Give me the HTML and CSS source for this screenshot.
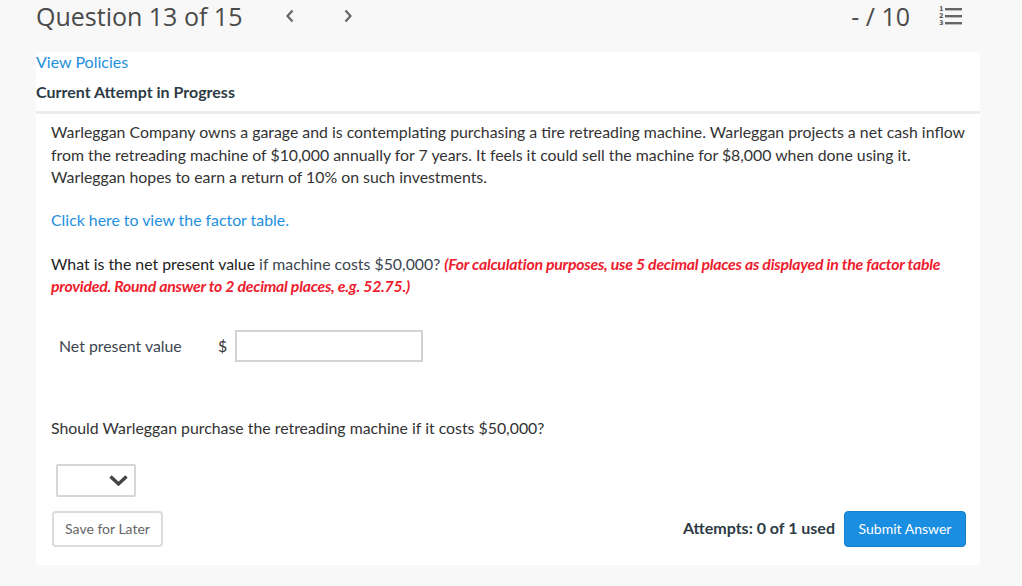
FILE: index.html
```html
<!DOCTYPE html>
<html lang="en">
<head>
<meta charset="utf-8">
<title>Question 13 of 15</title>
<link rel="stylesheet" href="styles.css">
</head>
<body>
<header class="topbar">
  <h1 class="q-title">Question 13 of 15</h1>
  <nav class="q-nav">
    <button class="nav-btn" aria-label="Previous"><svg width="10" height="14" viewBox="0 0 10 14"><path d="M7.5 1.5 L2.5 7 L7.5 12.5" fill="none" stroke="#666" stroke-width="2.2"/></svg></button>
    <button class="nav-btn" aria-label="Next"><svg width="10" height="14" viewBox="0 0 10 14"><path d="M2.5 1.5 L7.5 7 L2.5 12.5" fill="none" stroke="#666" stroke-width="2.2"/></svg></button>
  </nav>
  <div class="score">- / 10</div>
  <button class="list-btn" aria-label="Question list">
    <svg width="26" height="22" viewBox="0 0 26 22">
      <text x="1" y="7" class="num">1</text>
      <text x="1" y="14" class="num">2</text>
      <text x="1" y="21" class="num">3</text>
      <rect x="7" y="4" width="17" height="2.4" fill="#666"/>
      <rect x="7" y="11" width="17" height="2.4" fill="#666"/>
      <rect x="7" y="18" width="17" height="2.4" fill="#666"/>
    </svg>
  </button>
</header>
<main class="card">
  <a class="policies" href="#">View Policies</a>
  <h2 class="attempt">Current Attempt in Progress</h2>
  <section class="question">
    <p class="stem">Warleggan Company owns a garage and is contemplating purchasing a tire retreading machine. Warleggan projects a net cash inflow from the retreading machine of $10,000 annually for 7 years. It feels it could sell the machine for $8,000 when done using it. Warleggan hopes to earn a return of 10% on such investments.</p>
    <p class="factor"><a href="#">Click here to view the factor table.</a></p>
    <p class="prompt"><span class="dark">What is the net present value</span> if machine costs $50,000? <em class="note">(For calculation purposes, use 5 decimal places as displayed in the factor table provided. Round answer to 2 decimal places, e.g. 52.75.)</em></p>
    <div class="npv-row">
      <span class="npv-label">Net present value</span>
      <span class="cur">$</span>
      <span class="input"></span>
    </div>
    <p class="prompt2">Should Warleggan purchase the retreading machine if it costs $50,000?</p>
    <div class="select">
      <svg width="21" height="13" viewBox="0 0 21 13"><path d="M2.5 2.5 L10.5 10 L18.5 2.5" fill="none" stroke="#444" stroke-width="3.4"/></svg>
    </div>
    <div class="footer">
      <button class="btn-save">Save for Later</button>
      <div class="right">
        <span class="attempts">Attempts: 0 of 1 used</span>
        <button class="btn-submit">Submit Answer</button>
      </div>
    </div>
  </section>
</main>
</body>
</html>
```

FILE: styles.css
```css
* { box-sizing: border-box; }
html, body { margin: 0; padding: 0; }
body {
  background: #f8f8f8;
  font-family: Lato, "Open Sans", sans-serif;
  color: #333;
  width: 1022px;
  height: 586px;
  overflow: hidden;
}
.topbar {
  height: 52px;
  display: flex;
  align-items: center;
  padding-left: 36px;
}
.q-title {
  margin: 0;
  font-weight: 400;
  font-size: 25px;
  color: #4a4a4a;
  font-family: "Open Sans", Lato, sans-serif;
  width: 247px;
  position: relative;
  top: -10px;
}
.q-nav {
  display: flex;
  gap: 44px;
  position: relative;
  top: -10px;
}
.nav-btn {
  background: none;
  border: 0;
  padding: 0;
  width: 14px;
  height: 16px;
  display: flex;
  align-items: center;
  justify-content: center;
}
.score {
  margin-left: auto;
  font-family: "Open Sans", Lato, sans-serif;
  font-size: 25px;
  color: #4a4a4a;
  position: relative;
  top: -10px;
}
.list-btn {
  background: none;
  border: 0;
  padding: 0;
  margin: 0 58px 0 28px;
  position: relative;
  top: -11px;
  display: flex;
}
.num { font-size: 6.5px; font-family: "DejaVu Sans", sans-serif; fill: #555; font-weight: 700; }

.card {
  margin-left: 36px;
  width: 944px;
  height: 513px;
  background: #fff;
  display: flex;
  flex-direction: column;
}
.policies {
  display: block;
  color: #1e8fde;
  text-decoration: none;
  font-size: 16px;
  line-height: 20px;
}
.attempt {
  margin: 10px 0 0;
  font-size: 16px;
  line-height: 20px;
  font-weight: 700;
  color: #2d3b45;
  padding-bottom: 9px;
  border-bottom: 3px solid #ececec;
}
.question {
  padding: 7px 4px 0 15px;
  font-size: 15.85px;
  line-height: 22.5px;
  flex: 1;
  display: flex;
  flex-direction: column;
}
.question p { margin: 0; }
.stem { color: #333; }
.factor { margin-top: 20px !important; }
.factor a { color: #1e8fde; text-decoration: none; }
.prompt { margin-top: 22px !important; color: #3c4650; line-height: 22px; padding-right: 20px; }
.prompt .dark { color: #222; }
.note {
  color: #ee1c2e;
  font-weight: 700;
  font-style: italic;
  letter-spacing: -0.25px;
}
.npv-row {
  display: flex;
  align-items: center;
  margin-top: 33px;
  padding-left: 8px;
}
.npv-label { width: 159px; color: #3c4650; }
.cur { width: 17px; color: #333; }
.input {
  width: 188px;
  height: 32px;
  border: 2px solid #d3d3d3;
  background: #fff;
}
.prompt2 { margin-top: 55px !important; color: #333; }
.select {
  margin-top: 24px;
  margin-left: 5px;
  width: 80px;
  height: 33px;
  border: 2px solid #d6d6d6;
  border-radius: 2px;
  display: flex;
  align-items: center;
  justify-content: flex-end;
  padding-right: 5px;
}
.footer {
  margin-top: 14px;
  display: flex;
  justify-content: space-between;
  align-items: center;
  padding-left: 1px;
  padding-right: 10px;
}
.btn-save {
  font-family: Lato, sans-serif;
  font-size: 14px;
  color: #666;
  background: #fff;
  border: 2px solid #dcdcdc;
  border-radius: 4px;
  width: 111px;
  height: 36px;
  padding: 0;
}
.right { display: flex; align-items: center; gap: 9px; }
.attempts { font-weight: 700; color: #2d3b45; font-size: 16px; }
.btn-submit {
  font-family: Lato, sans-serif;
  font-size: 14px;
  color: #fff;
  background: #1a8ee1;
  border: 1px solid #167fca;
  border-radius: 4px;
  width: 122px;
  height: 36px;
  padding: 0;
}
```
